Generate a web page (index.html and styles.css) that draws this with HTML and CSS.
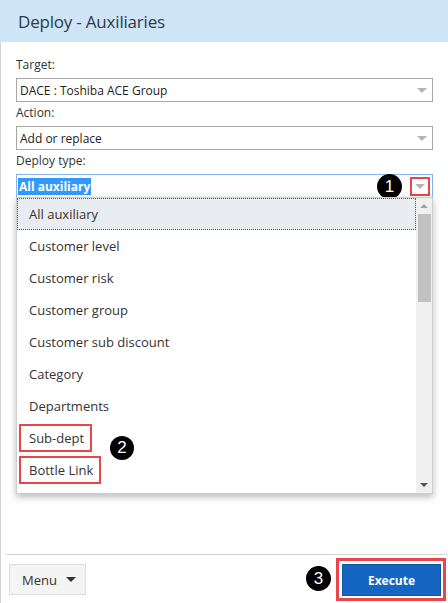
FILE: index.html
```html
<!DOCTYPE html>
<html>
<head>
<meta charset="utf-8">
<link rel="stylesheet" href="styles.css">
</head>
<body>
<div class="dialog">
  <header class="hd"><h1>Deploy - Auxiliaries</h1></header>
  <div class="main">
    <div class="form">
      <div class="field">
        <label>Target:</label>
        <div class="select"><span class="val">DACE : Toshiba ACE Group</span><i class="arrow"></i></div>
      </div>
      <div class="field">
        <label>Action:</label>
        <div class="select"><span class="val">Add or replace</span><i class="arrow"></i></div>
      </div>
      <div class="field">
        <label>Deploy type:</label>
        <div class="select focus">
          <span class="hl">All auxiliary</span>
          <span class="badge b1">1</span>
          <span class="arrowbox"><i class="arrow"></i></span>
          <div class="dropdown">
            <ul class="list">
              <li class="active"><span class="t">All auxiliary</span></li>
              <li><span class="t">Customer level</span></li>
              <li><span class="t">Customer risk</span></li>
              <li><span class="t">Customer group</span></li>
              <li><span class="t">Customer sub discount</span></li>
              <li><span class="t">Category</span></li>
              <li><span class="t">Departments</span></li>
              <li><span class="t mark">Sub-dept</span></li>
              <li><span class="t mark">Bottle Link</span></li>
            </ul>
            <div class="scrollbar">
              <div class="sb-btn"><i class="up"></i></div>
              <div class="sb-track"><div class="sb-thumb"></div></div>
              <div class="sb-btn"><i class="down"></i></div>
            </div>
            <span class="badge b2">2</span>
          </div>
        </div>
      </div>
    </div>
    <footer class="ft">
      <button class="menu-btn">Menu <i class="caret"></i></button>
      <span class="badge b3">3</span>
      <span class="exec-wrap"><button class="exec-btn">Execute</button></span>
    </footer>
  </div>
</div>
</body>
</html>
```

FILE: styles.css
```css
html, body {
  margin: 0;
  padding: 0;
  background: #fff;
}
body {
  font-family: "Open Sans", "Liberation Sans", sans-serif;
  color: #333;
}
.dialog {
  width: 448px;
  height: 603px;
  display: flex;
  flex-direction: column;
  overflow: hidden;
}
.hd {
  height: 42px;
  flex: none;
  background: #cfe4f6;
  padding-left: 18px;
  display: flex;
  align-items: center;
  box-sizing: border-box;
}
.hd h1 {
  margin: 0;
  font-size: 17px;
  font-weight: normal;
  color: #2b3a48;
  letter-spacing: -0.2px;
}
.main {
  flex: 1;
  border-left: 1px solid #d2d2d2;
  display: flex;
  flex-direction: column;
  min-height: 0;
}
.form {
  flex: 1;
  padding: 12px 15px 0 15px;
}
.field label {
  display: block;
  height: 24px;
  line-height: 22px;
  font-size: 12px;
  color: #333;
}
.select {
  position: relative;
  height: 24px;
  box-sizing: border-box;
  border: 1px solid #a8a8a8;
  display: flex;
  align-items: center;
  padding-left: 3px;
  font-size: 12px;
  color: #222;
}
.select.focus {
  border-color: #86b6e6;
  padding-left: 1px;
}
.arrow {
  margin-left: auto;
  margin-right: 5px;
  width: 0;
  height: 0;
  border-left: 5.5px solid transparent;
  border-right: 5.5px solid transparent;
  border-top: 5px solid #b5b5b5;
}
.arrowbox {
  margin-left: auto;
  margin-right: 2px;
  width: 20px;
  height: 19px;
  box-sizing: border-box;
  border: 2px solid #e8464a;
  display: flex;
  align-items: center;
  justify-content: center;
}
.arrowbox .arrow {
  margin: 0;
}
.hl {
  background: #3399ff;
  color: #fff;
  font-weight: bold;
  line-height: 17px;
  padding: 0 1px;
}
.badge {
  width: 25px;
  height: 25px;
  border-radius: 50%;
  background: #000;
  color: #fff;
  font-family: "Liberation Sans", Arial, sans-serif;
  font-size: 17px;
  line-height: 25px;
  text-align: center;
  display: inline-block;
}
.b1 {
  position: absolute;
  left: 360px;
  top: -1px;
}
.dropdown {
  position: absolute;
  left: -1px;
  right: -1px;
  top: 100%;
  height: 297px;
  box-sizing: border-box;
  background: #fff;
  border: 1px solid #cfcfcf;
  box-shadow: 0 3px 7px rgba(0, 0, 0, 0.28);
  display: flex;
  z-index: 5;
}
.list {
  flex: 1;
  list-style: none;
  margin: 0;
  padding: 0;
  overflow: hidden;
}
.list li {
  height: 32px;
  display: flex;
  align-items: center;
  padding-left: 2px;
  font-size: 13px;
  color: #333;
}
.list li.active {
  background: #e9ecf1;
  outline: 1px dotted #555;
  outline-offset: -1px;
}
.t {
  display: inline-block;
  border: 2px solid transparent;
  padding: 0 6px 0 8px;
  line-height: 24px;
}
.t.mark {
  border-color: #e8464a;
}
.scrollbar {
  width: 16px;
  flex: none;
  background: #f0f0f0;
  display: flex;
  flex-direction: column;
}
.sb-btn {
  height: 16px;
  display: flex;
  align-items: center;
  justify-content: center;
}
.sb-track {
  flex: 1;
}
.sb-thumb {
  margin-left: 2px;
  width: 13px;
  height: 88px;
  background: #c1c1c1;
}
.up {
  width: 0;
  height: 0;
  border-left: 4px solid transparent;
  border-right: 4px solid transparent;
  border-bottom: 4px solid #a3a3a3;
}
.down {
  width: 0;
  height: 0;
  border-left: 4px solid transparent;
  border-right: 4px solid transparent;
  border-top: 4px solid #505050;
}
.b2 {
  position: absolute;
  left: 93px;
  top: 238px;
  width: 24px;
  height: 24px;
  line-height: 24px;
}
.ft {
  flex: none;
  margin-left: 5px;
  border-top: 1px solid #d4d4d4;
  height: 49px;
  box-sizing: border-box;
  padding: 9px 2px 0 3px;
  display: flex;
  align-items: flex-start;
}
.menu-btn {
  width: 77px;
  height: 31px;
  box-sizing: border-box;
  background: #f4f4f4;
  border: 1px solid #dcdcdc;
  font-family: "Open Sans", "Liberation Sans", sans-serif;
  font-size: 13px;
  color: #333;
  display: flex;
  align-items: center;
  padding: 0 0 0 12px;
  gap: 9px;
}
.caret {
  width: 0;
  height: 0;
  border-left: 5px solid transparent;
  border-right: 5px solid transparent;
  border-top: 5px solid #333;
}
.b3 {
  margin-left: auto;
  margin-top: 2px;
  margin-right: 5px;
}
.exec-wrap {
  margin-top: -6px;
  border: 3px solid #e8464a;
  padding: 3px 2px 2px 3px;
  display: flex;
}
.exec-btn {
  width: 99px;
  height: 32px;
  background: #1566c0;
  border: 1px solid #0f55a4;
  color: #fff;
  font-family: "Open Sans", "Liberation Sans", sans-serif;
  font-size: 12px;
  font-weight: bold;
}
```
